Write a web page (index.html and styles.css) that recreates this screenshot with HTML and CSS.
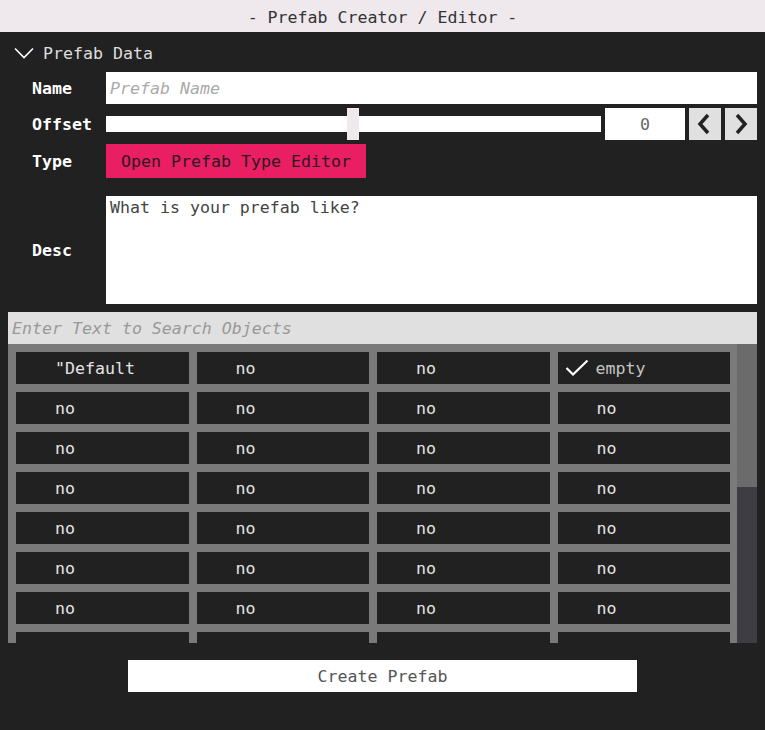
FILE: index.html
```html
<!DOCTYPE html>
<html>
<head>
<meta charset="utf-8">
<link rel="stylesheet" href="styles.css">
</head>
<body>
<div class="titlebar">- Prefab Creator / Editor -</div>
<div class="content">
  <div class="section-head">
    <svg class="chev" width="20" height="12" viewBox="0 0 20 12"><path d="M1 1.5 L10 10.5 L19 1.5" fill="none" stroke="#fff" stroke-width="1.6"/></svg>
    <span>Prefab Data</span>
  </div>
  <div class="form">
    <div class="label">Name</div>
    <div class="field"><div class="input placeholder">Prefab Name</div></div>

    <div class="label">Offset</div>
    <div class="field offset">
      <div class="slider"><div class="track"></div><div class="thumb"></div></div>
      <div class="number">0</div>
      <div class="arrow"><svg width="32" height="32" viewBox="0 0 32 32"><path d="M19 7 L11 16 L19 25" fill="none" stroke="#222" stroke-width="3.5"/></svg></div>
      <div class="arrow"><svg width="32" height="32" viewBox="0 0 32 32"><path d="M12 7 L20 16 L12 25" fill="none" stroke="#222" stroke-width="3.5"/></svg></div>
    </div>

    <div class="label">Type</div>
    <div class="field"><div class="typebtn">Open Prefab Type Editor</div></div>

    <div class="label desc-label">Desc</div>
    <div class="field desc-field"><div class="textarea">What is your prefab like?</div></div>
  </div>

  <div class="search">Enter Text to Search Objects</div>
  <div class="list">
    <div class="grid">
      <div class="cell">"Default</div><div class="cell">no</div><div class="cell">no</div>
      <div class="cell checked"><svg width="24" height="18" viewBox="0 0 24 18"><path d="M1.5 9 L8 15.5 L22.5 1.5" fill="none" stroke="#fff" stroke-width="2.2"/></svg><span>empty</span></div>
      <div class="cell">no</div><div class="cell">no</div><div class="cell">no</div><div class="cell">no</div>
      <div class="cell">no</div><div class="cell">no</div><div class="cell">no</div><div class="cell">no</div>
      <div class="cell">no</div><div class="cell">no</div><div class="cell">no</div><div class="cell">no</div>
      <div class="cell">no</div><div class="cell">no</div><div class="cell">no</div><div class="cell">no</div>
      <div class="cell">no</div><div class="cell">no</div><div class="cell">no</div><div class="cell">no</div>
      <div class="cell">no</div><div class="cell">no</div><div class="cell">no</div><div class="cell">no</div>
      <div class="cell"></div><div class="cell"></div><div class="cell"></div><div class="cell"></div>
    </div>
    <div class="scrollbar"><div class="sthumb"></div></div>
  </div>

  <div class="footer"><div class="create">Create Prefab</div></div>
</div>
</body>
</html>
```

FILE: styles.css
```css
* { box-sizing: border-box; }
html, body { margin: 0; padding: 0; }
body {
  width: 765px;
  height: 730px;
  background: #212121;
  font-family: "DejaVu Sans Mono", monospace;
  font-size: 16.6px;
  overflow: hidden;
}
.titlebar {
  height: 32px;
  background: #efe9ee;
  color: #333;
  display: flex;
  align-items: center;
  justify-content: center;
  padding-top: 2px;
}
.content {
  padding: 0 8px;
}
.section-head {
  height: 40px;
  display: flex;
  align-items: center;
  color: #ddd;
  padding-left: 6px;
  padding-top: 2px;
}
.chev { margin-right: 9px; }
.form {
  display: grid;
  grid-template-columns: 98px 1fr;
  grid-template-rows: 32px 32px 34px 122px;
  row-gap: 4px;
}
.label {
  color: #fff;
  font-weight: bold;
  padding-left: 24px;
  display: flex;
  align-items: center;
}
.desc-label { margin-top: 14px; }
.field { display: flex; align-items: stretch; }
.input {
  flex: 1;
  background: #fff;
  display: flex;
  align-items: center;
  padding-left: 4px;
}
.placeholder { color: #aaa; font-style: italic; }
.offset { gap: 4px; }
.slider {
  flex: 1;
  position: relative;
  display: flex;
  align-items: center;
}
.track { height: 16px; width: 100%; background: #fff; }
.thumb {
  position: absolute;
  left: 241px;
  top: 0;
  width: 12px;
  height: 32px;
  background: #efe9ee;
}
.number {
  width: 80px;
  background: #fff;
  color: #666;
  display: flex;
  align-items: center;
  justify-content: center;
}
.arrow {
  width: 32px;
  background: #e0e0e0;
}
.arrow svg { display: block; }
.typebtn {
  width: 260px;
  background: #e91e63;
  color: #2a1a20;
  display: flex;
  align-items: center;
  justify-content: center;
}
.desc-field { align-items: flex-start; }
.textarea {
  flex: 1;
  background: #fff;
  color: #444;
  padding: 2px 4px;
  margin-top: 14px;
  height: 108px;
}
.search {
  margin-top: 8px;
  height: 32px;
  background: #e0e0e0;
  color: #999;
  font-style: italic;
  display: flex;
  align-items: center;
  padding-left: 4px;
}
.list {
  height: 299px;
  background: #7a7a7a;
  display: flex;
  overflow: hidden;
}
.grid {
  flex: 1;
  padding: 8px 7px 0 8px;
  display: grid;
  grid-template-columns: repeat(4, 1fr);
  grid-auto-rows: 32px;
  gap: 8px;
  align-content: start;
}
.cell {
  background: #212121;
  color: #e4e4e4;
  display: flex;
  align-items: center;
  padding-left: 39px;
}
.cell.checked {
  padding-left: 7px;
  color: #c4c4c4;
  gap: 7px;
}
.cell.checked svg { display: block; }
.scrollbar {
  width: 20px;
  background: #3e3d44;
}
.sthumb { height: 143px; background: #6b6b6b; }
.footer {
  padding-top: 17px;
  display: flex;
  justify-content: center;
}
.create {
  width: 509px;
  height: 32px;
  background: #fff;
  color: #555;
  display: flex;
  align-items: center;
  justify-content: center;
}
```
